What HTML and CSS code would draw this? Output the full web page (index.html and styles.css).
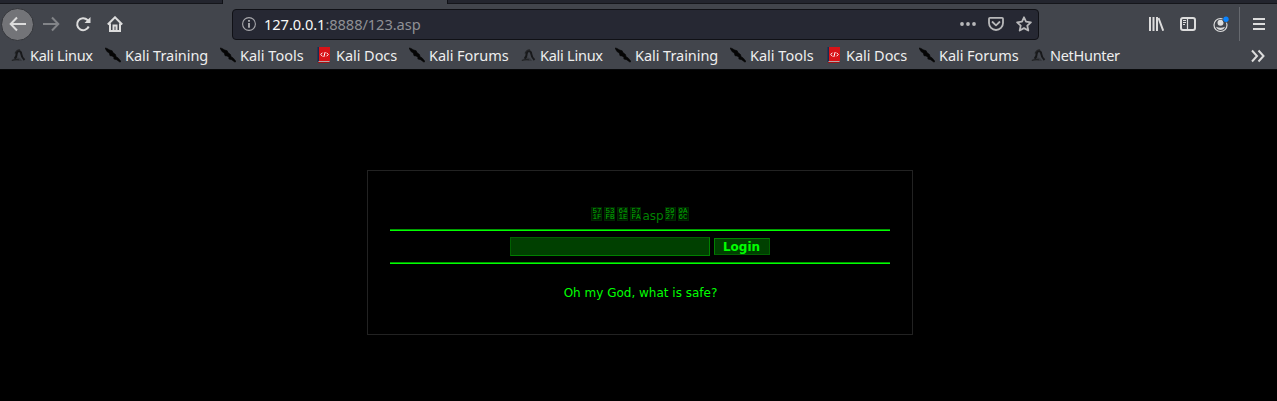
FILE: index.html
```html
<!DOCTYPE html>
<html lang="en">
<head>
<meta charset="utf-8">
<title>127.0.0.1:8888/123.asp</title>
<link rel="stylesheet" href="styles.css">
</head>
<body>
<svg class="defs" width="0" height="0" aria-hidden="true">
  <symbol id="kali" viewBox="0 0 16 16">
    <path d="M1 13.500q4-3.500 7-3t4 3.500z" fill="#35373c"/>
    <path d="M4.500 11.500q2-1 2.100-4.500Q7 4 9 4q2 .3 2.300 3 .2 3 3.200 6" fill="none" stroke="#18191b" stroke-width="2"/>
    <path d="M5 6.500Q7 2.500 10 3" fill="none" stroke="#222326" stroke-width="1.200"/>
    <path d="M2 13.500q4-1.500 7-.7" fill="none" stroke="#222326" stroke-width="1.100"/>
  </symbol>
  <symbol id="tool" viewBox="0 0 16 16">
    <path d="M0 1l2 .4 2.200 1.400 3 1 .7 1.700 2.600 2 .6 2.200 2 1.200 3 3.600-1.300.5-3.200-2.300-2.800-.8.300-1.300-2-1.600-2.100-.3L4.300 6 2 4.600z" fill="#050505" stroke="#050505" stroke-width=".6"/>
  </symbol>
  <symbol id="docs" viewBox="0 0 16 16">
    <path d="M1.500 0h2v15h-2z" fill="#182c50"/>
    <path d="M3 0h11v14H3z" fill="#d91317"/>
    <path d="M2.500 14h11v1h-11z" fill="#b8a8a8"/>
    <path d="M2 15h11.500v1H2z" fill="#a51214"/>
    <path d="M6.500 5.700L4.700 7.500l1.800 1.800M10.500 5.700l1.800 1.800-1.800 1.800M9.200 5l-1.400 5" fill="none" stroke="#fff" stroke-width="1"/>
  </symbol>
</svg>
<header class="browser">
  <div class="tabs"><div class="tab"></div></div>
  <nav class="toolbar">
    <div class="back"><svg width="18" height="16" viewBox="0 0 18 16"><path d="M8 1.500L1.700 8 8 14.500M2 8h15" class="line"/></svg></div>
    <svg class="forward" width="18" height="16" viewBox="0 0 18 16"><path d="M10 1.500L16.300 8 10 14.500M16 8H1" class="line"/></svg>
    <svg class="reload" width="16" height="16" viewBox="0 0 16 16"><path d="M13.700 10.500A6 6 0 1 1 12.500 4l1 1.200" class="line"/><path d="M15.500 1v6h-6z" fill="#dcdcdc"/></svg>
    <svg class="home" width="16" height="16" viewBox="0 0 16 16"><path d="M.800 8.500L8 1.300l7.200 7.200M3 7.500V15h10V7.500" class="line"/><path d="M6.500 15V9.500h3V15" class="line"/></svg>
    <div class="address">
      <svg class="info" width="14" height="14" viewBox="0 0 14 14"><circle cx="7" cy="7" r="6.400" fill="none" stroke="#a8a8ac" stroke-width="1.100"/><path d="M7 6v4.800M7 3v1.700" stroke="#b8b8bb" stroke-width="1.700"/></svg>
      <span class="url">127.0.0.1<span class="path">:8888/123.asp</span></span>
      <svg class="dots" width="16" height="16" viewBox="0 0 16 16"><g fill="#b8b8ba"><circle cx="2" cy="8" r="1.900"/><circle cx="8" cy="8" r="1.900"/><circle cx="14" cy="8" r="1.900"/></g></svg>
      <svg class="pocket" width="16" height="16" viewBox="0 0 16 16"><path d="M2 1.800h12q1 0 1 1V7a7 7 0 0 1-14 0V2.800q0-1 1-1z" class="muted"/><path d="M4.500 6L8 9.300 11.500 6" class="muted"/></svg>
      <svg class="star" width="16" height="16" viewBox="0 0 16 16"><path d="M8 1.300l2 4.400 4.900.6-3.600 3.300 1 4.900L8 12.100l-4.300 2.400 1-4.900L1.100 6.300 6 5.700z" class="muted"/></svg>
    </div>
    <svg class="library" width="16" height="16" viewBox="0 0 16 16"><path d="M2 1v14M5.500 1v14M9 1v14M10.500 2l4.700 12.700" class="line"/></svg>
    <svg class="sidebar" width="16" height="16" viewBox="0 0 16 16"><rect x="1" y="2" width="14" height="12" rx="2" class="line"/><path d="M7.500 2v12" class="line thin"/><path d="M3 4.500h3M3 6.500h3M3 8.500h2" class="line thin"/></svg>
    <svg class="account" width="17" height="17" viewBox="0 0 17 17"><circle cx="7.500" cy="9" r="6.500" class="line thin"/><circle cx="7.500" cy="6.700" r="3" fill="#dcdcdc"/><path d="M3 10.700q4.500 2.200 9 0Q10.500 14 7.500 14T3 10.700z" fill="#dcdcdc"/><circle cx="13" cy="3.300" r="3.500" fill="#42454c"/><circle cx="13" cy="3.300" r="2.700" fill="#0a84ff"/></svg>
    <div class="divider"></div>
    <svg class="menu" width="12" height="12" viewBox="0 0 12 12"><path d="M0 1h12M0 6h12M0 11h12" class="line"/></svg>
  </nav>
  <div class="bookmarks">
    <span class="mark linux"><svg><use href="#kali"/></svg>Kali Linux</span>
    <span class="mark training"><svg><use href="#tool"/></svg>Kali Training</span>
    <span class="mark tools"><svg><use href="#tool"/></svg>Kali Tools</span>
    <span class="mark docs"><svg><use href="#docs"/></svg>Kali Docs</span>
    <span class="mark forums"><svg><use href="#tool"/></svg>Kali Forums</span>
    <span class="mark linux"><svg><use href="#kali"/></svg>Kali Linux</span>
    <span class="mark training"><svg><use href="#tool"/></svg>Kali Training</span>
    <span class="mark tools"><svg><use href="#tool"/></svg>Kali Tools</span>
    <span class="mark docs"><svg><use href="#docs"/></svg>Kali Docs</span>
    <span class="mark forums"><svg><use href="#tool"/></svg>Kali Forums</span>
    <span class="mark hunter"><svg><use href="#kali"/></svg>NetHunter</span>
    <svg class="more" width="14" height="14" viewBox="0 0 14 14"><path d="M1 1.500L6 7l-5 5.500M7.500 1.500l5 5.500-5 5.500" class="line"/></svg>
  </div>
</header>
<main class="panel">
  <div class="title"><span class="hex">57<br>1F</span><span class="hex">53<br>FB</span><span class="hex">64<br>1E</span><span class="hex">57<br>FA</span><span class="asp">asp</span><span class="hex">59<br>27</span><span class="hex">9A<br>6C</span></div>
  <form class="login"><input class="password" type="password" aria-label="Password"><button class="submit" type="button">Login</button></form>
  <p class="message">Oh my God, what is safe?</p>
</main>
</body>
</html>
```
FILE: styles.css
```css
* { box-sizing: border-box; }
body { margin: 0; height: 401px; overflow: hidden; background: #000; font-family: "DejaVu Sans", sans-serif; }
svg { display: block; flex: none; }
.defs { position: absolute; }
.line { fill: none; stroke: #dcdcdc; stroke-width: 2; }
.thin { stroke-width: 1.200; }
.muted { fill: none; stroke: #b8b8ba; stroke-width: 1.800; stroke-linejoin: round; stroke-linecap: round; }
.browser { height: 70px; background: #42454c; border-bottom: 1px solid #08090b; font-family: "Noto Sans", sans-serif; color: #eee; }
.tabs { height: 4px; background: #23252e; border-bottom: 1px solid #15161b; }
.tab { width: 226px; height: 4px; margin-left: 222px; background: #42454c; border: solid #101116; border-width: 0 1px; }
.toolbar { height: 40px; display: flex; align-items: center; }
.back { width: 33px; height: 33px; margin-left: 1px; border: 1px solid #34363b; border-radius: 50%; background: #737478; display: grid; place-items: center; }
.forward { margin-left: 8px; opacity: .42; }
.reload { margin-left: 15px; }
.home { margin-left: 16px; }
.address { width: 807px; height: 31px; margin-left: 109px; border: 1px solid #101116; border-radius: 4px; background: #262833; display: flex; align-items: center; }
.info { margin-left: 9px; }
.url { margin-left: 8px; flex: 1; font-size: 14.670px; line-height: 28px; letter-spacing: -.08px; color: #f8f8f8; white-space: nowrap; }
.path { color: #8f9095; }
.pocket, .star { margin-left: 12px; }
.star { margin-right: 6px; }
.library { margin-left: 109px; }
.sidebar { margin-left: 16px; }
.account { margin-left: 17px; }
.divider { width: 1px; height: 34px; margin-left: 9px; background: #66696f; }
.menu { margin-left: 13px; }
.bookmarks { height: 23px; display: flex; align-items: center; padding-left: 10px; font-size: 14.500px; line-height: 21px; letter-spacing: -.05px; white-space: nowrap; }
.mark { height: 21px; margin-top: -1px; display: flex; align-items: center; gap: 4px; }
.mark svg { width: 16px; height: 16px; }
.linux { width: 95px; letter-spacing: -.25px; }
.training { width: 115px; }
.tools { width: 96px; letter-spacing: 0; }
.docs { width: 93px; }
.forums { width: 111px; }
.hunter { letter-spacing: -.3px; }
.more { margin: 0 12px 0 auto; }
.panel { width: 546px; height: 165px; margin: 100px 0 0 367px; padding: 36px 22px 0; border: 1px solid #222; }
.title { height: 22px; display: flex; justify-content: center; color: #008000; }
.hex { width: 11px; height: 14px; margin: 0 1px; border: 1px solid #002800; background: #001800; color: #00b000; font: 7.500px/6px "Liberation Mono", monospace; text-align: center; display: block; }
.asp { font-size: 12px; line-height: 18px; }
.login { height: 35px; border: solid #00ff00; border-width: 2px 0; border-image: linear-gradient(#009b00 0 1px, #00ff00 1px 33px, #009b00 33px 34px, #00ff00 34px) 2; display: flex; justify-content: center; align-items: center; gap: 4px; }
.password { width: 200px; height: 19px; margin: 0; padding: 0 2px; border: 1px solid; border-color: #006000 #008000 #008000 #006000; background: #004000; color: #00ff00; }
.submit { width: 56px; height: 17px; margin: 0; padding: 0 1px 0 0; border: 1px solid; border-color: #008000 #006000 #006000 #008000; background: #004000; color: #00ff00; font: bold 12px/14px "DejaVu Sans", sans-serif; }
.message { margin: 22px 0 0 1px; color: #00ff00; font-size: 12px; line-height: 14px; text-align: center; }
```
